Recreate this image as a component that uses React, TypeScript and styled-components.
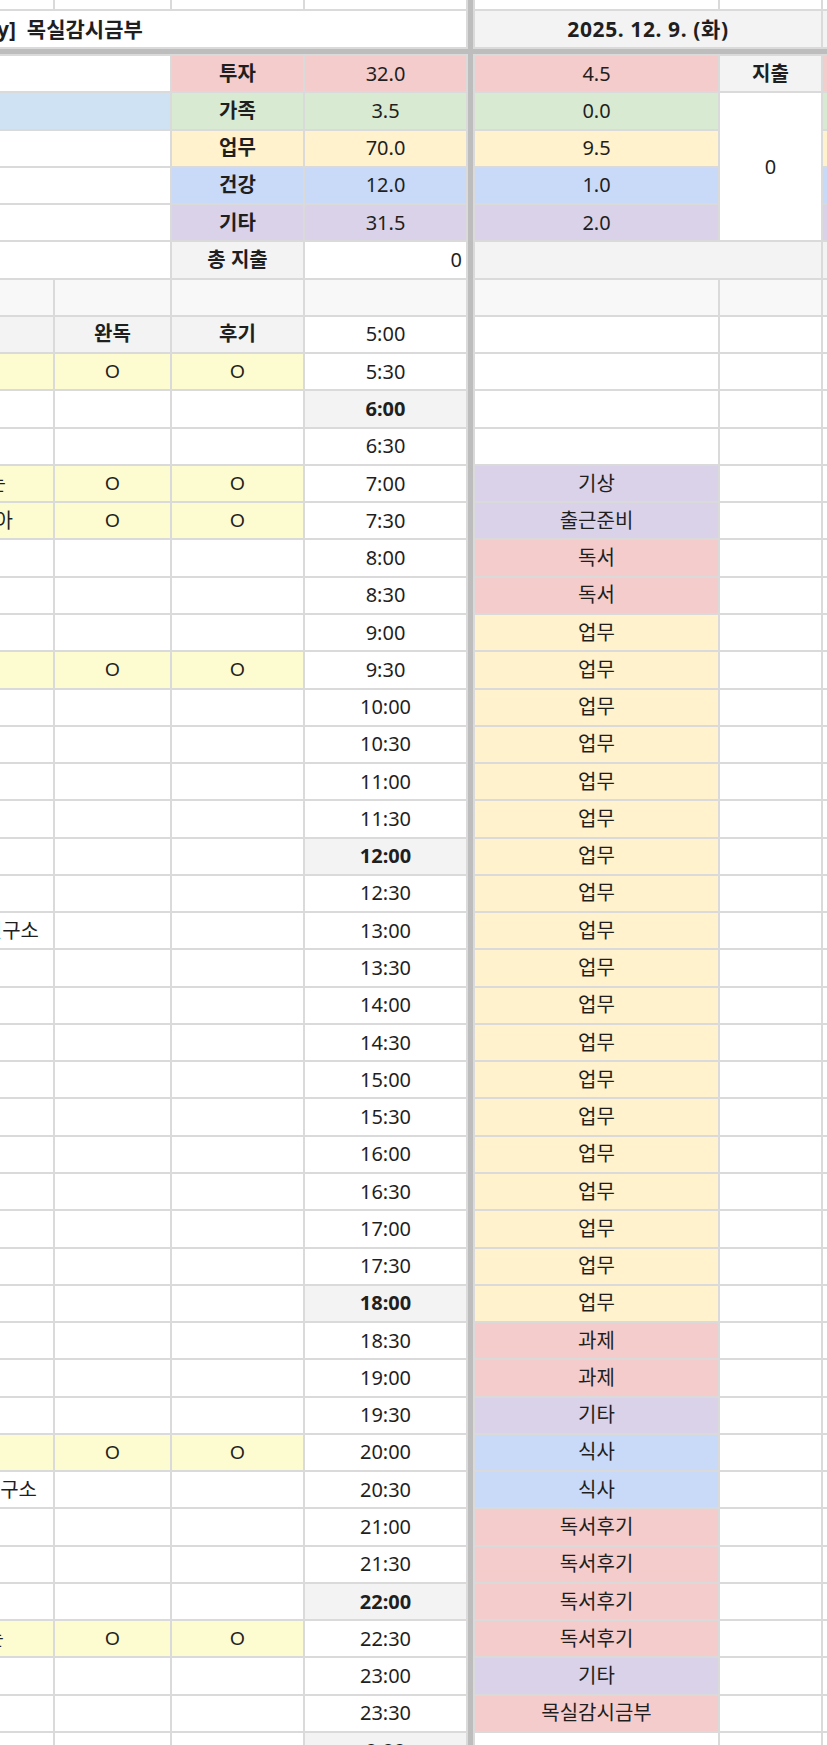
import React from "react";
import styled, { createGlobalStyle, css } from "styled-components";

const GlobalStyle = createGlobalStyle`
  html, body {
    margin: 0;
    padding: 0;
    background: #ffffff;
    overflow: hidden;
    width: 827px;
    height: 1745px;
  }
  body {
    font-family: "Noto Sans", "Noto Sans CJK KR", sans-serif;
    color: #1f1f1f;
  }
`;

type Tone =
  | "white"
  | "gray"
  | "light"
  | "pink"
  | "green"
  | "yellow"
  | "blue"
  | "purple"
  | "sky"
  | "lemon";

const tones: Record<Tone, string> = {
  white: "#ffffff",
  gray: "#f3f3f3",
  light: "#f8f8f8",
  pink: "#f4cccc",
  green: "#d9ead3",
  yellow: "#fff2cc",
  blue: "#c9daf8",
  purple: "#d9d2e9",
  sky: "#cfe2f3",
  lemon: "#fdfbd0",
};

const ROW_H = 35.27;

const Sheet = styled.div`
  display: grid;
  grid-template-columns: 53px 115px 131px 161px 5px 243px 101px 30px;
  grid-template-rows: 9px 36px 5px repeat(46, ${ROW_H}px);
  gap: 2px;
  background: #dadada;
  width: max-content;
  font-family: "Noto Sans", "Noto Sans CJK KR", sans-serif;
  font-size: 20px;
`;

const VSep = styled.div`
  grid-column: 5;
  grid-row: 1 / -1;
  background: #bdbdbd;
`;

const HSep = styled.div`
  grid-column: 1 / -1;
  grid-row: 3;
  background: #bdbdbd;
`;

const Cell = styled.div<{
  $tone?: Tone;
  $bold?: boolean;
  $align?: "left" | "center" | "right";
  $span?: number;
  $rows?: number;
}>`
  background: ${(p) => tones[p.$tone ?? "white"]};
  display: flex;
  align-items: center;
  justify-content: ${(p) =>
    p.$align === "left" ? "flex-start" : p.$align === "right" ? "flex-end" : "center"};
  font-weight: ${(p) => (p.$bold ? 700 : 400)};
  overflow: hidden;
  white-space: nowrap;
  line-height: 1;
  ${(p) => p.$span && css`grid-column: span ${p.$span};`}
  ${(p) => p.$rows && css`grid-row: span ${p.$rows};`}
  ${(p) => p.$align === "right" && css`padding-right: 4px;`}
`;

const TitleCell = styled(Cell)`
  justify-content: flex-start;
  font-size: 21px;
  white-space: pre;
  & > span {
    margin-left: -3px;
  }
`;

const DateCell = styled(Cell)`
  font-size: 21px;
  letter-spacing: 0.6px;
`;

const CutCell = styled(Cell)<{ $end: number }>`
  justify-content: flex-end;
  padding-right: ${(p) => p.$end}px;
`;

const Mark = styled.span`
  font-size: 19px;
  font-family: "Liberation Sans", "Noto Sans", sans-serif;
`;

type Sched = { label: string; tone: Tone } | null;

const times: string[] = [];
for (let h = 5; h <= 23; h++) {
  times.push(`${h}:00`);
  times.push(`${h}:30`);
}
times.push("0:00");

const boldHours = new Set(["6:00", "12:00", "18:00", "22:00", "0:00"]);
const readRows = new Set(["5:30", "7:00", "7:30", "9:30", "20:00", "22:30"]);

const leftText: Record<string, { text: string; end: number }> = {
  "7:00": { text: "않는", end: 47 },
  "7:30": { text: "하는 아", end: 40 },
  "13:00": { text: "연구소", end: 14 },
  "20:30": { text: "연구소", end: 16 },
  "22:30": { text: "않는", end: 49 },
};

function schedule(t: string): Sched {
  const [hs, ms] = t.split(":");
  const m = parseInt(hs, 10) * 60 + parseInt(ms, 10);
  if (t === "0:00") return null;
  if (m === 7 * 60) return { label: "기상", tone: "purple" };
  if (m === 7 * 60 + 30) return { label: "출근준비", tone: "purple" };
  if (m === 8 * 60 || m === 8 * 60 + 30) return { label: "독서", tone: "pink" };
  if (m >= 9 * 60 && m <= 18 * 60) return { label: "업무", tone: "yellow" };
  if (m === 18 * 60 + 30 || m === 19 * 60) return { label: "과제", tone: "pink" };
  if (m === 19 * 60 + 30) return { label: "기타", tone: "purple" };
  if (m === 20 * 60 || m === 20 * 60 + 30) return { label: "식사", tone: "blue" };
  if (m >= 21 * 60 && m <= 22 * 60 + 30) return { label: "독서후기", tone: "pink" };
  if (m === 23 * 60) return { label: "기타", tone: "purple" };
  if (m === 23 * 60 + 30) return { label: "목실감시금부", tone: "pink" };
  return null;
}

const summary: { label: string; tone: Tone; total: string; day: string }[] = [
  { label: "투자", tone: "pink", total: "32.0", day: "4.5" },
  { label: "가족", tone: "green", total: "3.5", day: "0.0" },
  { label: "업무", tone: "yellow", total: "70.0", day: "9.5" },
  { label: "건강", tone: "blue", total: "12.0", day: "1.0" },
  { label: "기타", tone: "purple", total: "31.5", day: "2.0" },
];

function TimeRow({ t, first }: { t: string; first?: boolean }) {
  const s = schedule(t);
  const read = readRows.has(t);
  const txt = leftText[t];
  const bold = boldHours.has(t);
  const leftTone: Tone = read ? "lemon" : "white";
  return (
    <>
      {first ? (
        <>
          <Cell $tone="gray" />
          <Cell $tone="gray" $bold>완독</Cell>
          <Cell $tone="gray" $bold>후기</Cell>
        </>
      ) : (
        <>
          {txt ? (
            <CutCell $tone={leftTone} $end={txt.end}>{txt.text}</CutCell>
          ) : (
            <Cell $tone={leftTone} />
          )}
          <Cell $tone={leftTone}>{read && <Mark>O</Mark>}</Cell>
          <Cell $tone={leftTone}>{read && <Mark>O</Mark>}</Cell>
        </>
      )}
      <Cell $tone={bold ? "gray" : "white"} $bold={bold}>{t}</Cell>
      <Cell $tone={s ? s.tone : "white"}>{s ? s.label : ""}</Cell>
      <Cell />
      <Cell />
    </>
  );
}

export default function App() {
  return (
    <>
      <GlobalStyle />
      <Sheet>
        <VSep />
        <HSep />
        {/* row 0 */}
        <Cell />
        <Cell />
        <Cell />
        <Cell />
        <Cell />
        <Cell />
        <Cell />
        {/* title row */}
        <TitleCell $span={4} $bold>
          <span>{"y]  목실감시금부"}</span>
        </TitleCell>
        <DateCell $span={2} $tone="gray" $bold>2025. 12. 9. (화)</DateCell>
        <Cell $tone="gray" />
        {/* summary rows */}
        {summary.map((r, i) => (
          <React.Fragment key={r.label}>
            <Cell $span={2} $tone={i === 1 ? "sky" : "white"} />
            <Cell $tone={r.tone} $bold>{r.label}</Cell>
            <Cell $tone={r.tone}>{r.total}</Cell>
            <Cell $tone={r.tone}>{r.day}</Cell>
            {i === 0 && <Cell $tone="gray" $bold>지출</Cell>}
            {i === 1 && <Cell $rows={4}>0</Cell>}
            <Cell $tone={r.tone} />
          </React.Fragment>
        ))}
        <Cell $span={2} />
        <Cell $tone="gray" $bold>총 지출</Cell>
        <Cell $align="right">0</Cell>
        <Cell $span={2} $tone="gray" />
        <Cell $tone="gray" />
        {/* blank light row */}
        <Cell $tone="light" />
        <Cell $tone="light" />
        <Cell $tone="light" />
        <Cell $tone="light" />
        <Cell $tone="light" />
        <Cell $tone="light" />
        <Cell $tone="light" />
        {times.map((t, i) => (
          <TimeRow key={t} t={t} first={i === 0} />
        ))}
      </Sheet>
    </>
  );
}
